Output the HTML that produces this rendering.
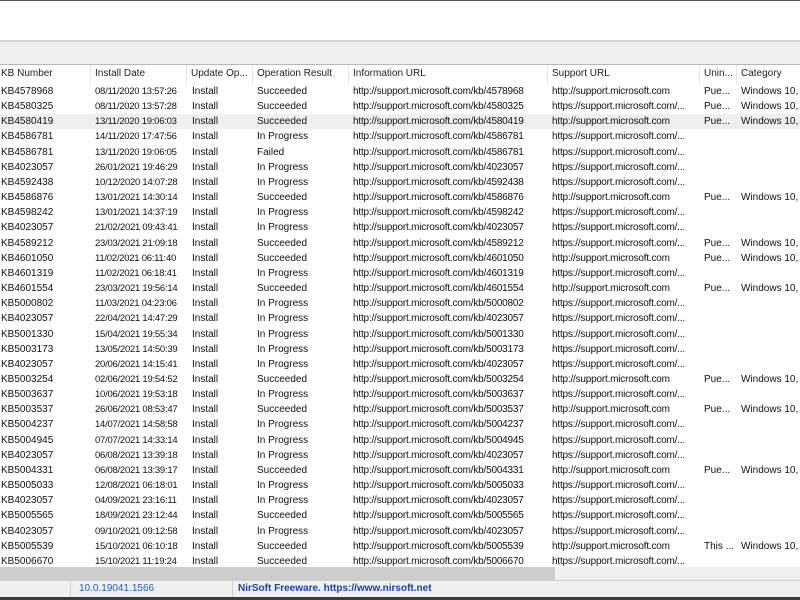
<!DOCTYPE html>
<html><head><meta charset="utf-8"><style>
*{margin:0;padding:0;box-sizing:border-box}
body{width:800px;height:600px;overflow:hidden;background:#fff;font-family:"Liberation Sans",sans-serif;font-size:10px;color:#111;position:relative}
#top{position:absolute;left:0;top:0;width:800px;height:1px;background:#555}
#tb{position:absolute;left:0;top:40px;width:800px;height:25px;background:#f0f0f0;border-top:2px solid #d4d4d4;border-bottom:1px solid #b8b8b8}
#hdr{position:absolute;left:0;top:65px;width:800px;height:18px;background:#fff}
.h{position:absolute;top:0;height:18px;line-height:18px;padding-left:1px;color:#222;border-right:1px solid #e5e5e5;white-space:nowrap;overflow:hidden}
#rows{position:absolute;left:0;top:84px;width:800px}
.r{position:relative;height:15.17px;line-height:15px;white-space:nowrap}
.r.sel{background:#efefef}
.r span{position:absolute;top:0}
.c0{left:1px}.c1{left:95px;font-size:9.5px;letter-spacing:-0.25px}.c2{left:192px}.c3{left:257px}.c4{left:353px;letter-spacing:-0.2px}.c5{left:552px;letter-spacing:-0.2px}.c6{left:704px}.c7{left:741px}
#sb{position:absolute;left:0;top:567px;width:800px;height:13px;background:#f0f0f0}
#th{position:absolute;left:0;top:567px;width:555px;height:13px;background:#cdcdcd}
#st{position:absolute;left:0;top:580px;width:800px;height:17px;background:#f0f0f0;border-top:1px solid #d0d0d0}
#st div{position:absolute;top:0;height:16px;line-height:16px;color:#1a5fc0;font-size:10px}
#bot{position:absolute;left:0;top:597px;width:800px;height:3px;background:#3a3a3a}
</style></head><body>
<div id="top"></div>
<div id="tb"></div>
<div id="hdr">
<div class="h" style="left:0;width:91px">KB Number</div>
<div class="h" style="left:94px;width:93px">Install Date</div>
<div class="h" style="left:190px;width:63px">Update Op...</div>
<div class="h" style="left:256px;width:93px">Operation Result</div>
<div class="h" style="left:352px;width:196px">Information URL</div>
<div class="h" style="left:551px;width:149px">Support URL</div>
<div class="h" style="left:703px;width:34px">Unin...</div>
<div class="h" style="left:740px;width:60px;border:none">Category</div>
</div>
<div id="rows">
<div class="r"><span class="c0">KB4578968</span><span class="c1">08/11/2020 13:57:26</span><span class="c2">Install</span><span class="c3">Succeeded</span><span class="c4">http://support.microsoft.com/kb/4578968</span><span class="c5">http://support.microsoft.com</span><span class="c6">Pue...</span><span class="c7">Windows 10, v</span></div>
<div class="r"><span class="c0">KB4580325</span><span class="c1">08/11/2020 13:57:28</span><span class="c2">Install</span><span class="c3">Succeeded</span><span class="c4">http://support.microsoft.com/kb/4580325</span><span class="c5">https://support.microsoft.com/...</span><span class="c6">Pue...</span><span class="c7">Windows 10, v</span></div>
<div class="r sel"><span class="c0">KB4580419</span><span class="c1">13/11/2020 19:06:03</span><span class="c2">Install</span><span class="c3">Succeeded</span><span class="c4">http://support.microsoft.com/kb/4580419</span><span class="c5">http://support.microsoft.com</span><span class="c6">Pue...</span><span class="c7">Windows 10, v</span></div>
<div class="r"><span class="c0">KB4586781</span><span class="c1">14/11/2020 17:47:56</span><span class="c2">Install</span><span class="c3">In Progress</span><span class="c4">http://support.microsoft.com/kb/4586781</span><span class="c5">https://support.microsoft.com/...</span></div>
<div class="r"><span class="c0">KB4586781</span><span class="c1">13/11/2020 19:06:05</span><span class="c2">Install</span><span class="c3">Failed</span><span class="c4">http://support.microsoft.com/kb/4586781</span><span class="c5">https://support.microsoft.com/...</span></div>
<div class="r"><span class="c0">KB4023057</span><span class="c1">26/01/2021 19:46:29</span><span class="c2">Install</span><span class="c3">In Progress</span><span class="c4">http://support.microsoft.com/kb/4023057</span><span class="c5">https://support.microsoft.com/...</span></div>
<div class="r"><span class="c0">KB4592438</span><span class="c1">10/12/2020 14:07:28</span><span class="c2">Install</span><span class="c3">In Progress</span><span class="c4">http://support.microsoft.com/kb/4592438</span><span class="c5">https://support.microsoft.com/...</span></div>
<div class="r"><span class="c0">KB4586876</span><span class="c1">13/01/2021 14:30:14</span><span class="c2">Install</span><span class="c3">Succeeded</span><span class="c4">http://support.microsoft.com/kb/4586876</span><span class="c5">http://support.microsoft.com</span><span class="c6">Pue...</span><span class="c7">Windows 10, v</span></div>
<div class="r"><span class="c0">KB4598242</span><span class="c1">13/01/2021 14:37:19</span><span class="c2">Install</span><span class="c3">In Progress</span><span class="c4">http://support.microsoft.com/kb/4598242</span><span class="c5">https://support.microsoft.com/...</span></div>
<div class="r"><span class="c0">KB4023057</span><span class="c1">21/02/2021 09:43:41</span><span class="c2">Install</span><span class="c3">In Progress</span><span class="c4">http://support.microsoft.com/kb/4023057</span><span class="c5">https://support.microsoft.com/...</span></div>
<div class="r"><span class="c0">KB4589212</span><span class="c1">23/03/2021 21:09:18</span><span class="c2">Install</span><span class="c3">Succeeded</span><span class="c4">http://support.microsoft.com/kb/4589212</span><span class="c5">https://support.microsoft.com/...</span><span class="c6">Pue...</span><span class="c7">Windows 10, v</span></div>
<div class="r"><span class="c0">KB4601050</span><span class="c1">11/02/2021 06:11:40</span><span class="c2">Install</span><span class="c3">Succeeded</span><span class="c4">http://support.microsoft.com/kb/4601050</span><span class="c5">http://support.microsoft.com</span><span class="c6">Pue...</span><span class="c7">Windows 10, v</span></div>
<div class="r"><span class="c0">KB4601319</span><span class="c1">11/02/2021 06:18:41</span><span class="c2">Install</span><span class="c3">In Progress</span><span class="c4">http://support.microsoft.com/kb/4601319</span><span class="c5">https://support.microsoft.com/...</span></div>
<div class="r"><span class="c0">KB4601554</span><span class="c1">23/03/2021 19:56:14</span><span class="c2">Install</span><span class="c3">Succeeded</span><span class="c4">http://support.microsoft.com/kb/4601554</span><span class="c5">http://support.microsoft.com</span><span class="c6">Pue...</span><span class="c7">Windows 10, v</span></div>
<div class="r"><span class="c0">KB5000802</span><span class="c1">11/03/2021 04:23:06</span><span class="c2">Install</span><span class="c3">In Progress</span><span class="c4">http://support.microsoft.com/kb/5000802</span><span class="c5">https://support.microsoft.com/...</span></div>
<div class="r"><span class="c0">KB4023057</span><span class="c1">22/04/2021 14:47:29</span><span class="c2">Install</span><span class="c3">In Progress</span><span class="c4">http://support.microsoft.com/kb/4023057</span><span class="c5">https://support.microsoft.com/...</span></div>
<div class="r"><span class="c0">KB5001330</span><span class="c1">15/04/2021 19:55:34</span><span class="c2">Install</span><span class="c3">In Progress</span><span class="c4">http://support.microsoft.com/kb/5001330</span><span class="c5">https://support.microsoft.com/...</span></div>
<div class="r"><span class="c0">KB5003173</span><span class="c1">13/05/2021 14:50:39</span><span class="c2">Install</span><span class="c3">In Progress</span><span class="c4">http://support.microsoft.com/kb/5003173</span><span class="c5">https://support.microsoft.com/...</span></div>
<div class="r"><span class="c0">KB4023057</span><span class="c1">20/06/2021 14:15:41</span><span class="c2">Install</span><span class="c3">In Progress</span><span class="c4">http://support.microsoft.com/kb/4023057</span><span class="c5">https://support.microsoft.com/...</span></div>
<div class="r"><span class="c0">KB5003254</span><span class="c1">02/06/2021 19:54:52</span><span class="c2">Install</span><span class="c3">Succeeded</span><span class="c4">http://support.microsoft.com/kb/5003254</span><span class="c5">http://support.microsoft.com</span><span class="c6">Pue...</span><span class="c7">Windows 10, v</span></div>
<div class="r"><span class="c0">KB5003637</span><span class="c1">10/06/2021 19:53:18</span><span class="c2">Install</span><span class="c3">In Progress</span><span class="c4">http://support.microsoft.com/kb/5003637</span><span class="c5">https://support.microsoft.com/...</span></div>
<div class="r"><span class="c0">KB5003537</span><span class="c1">26/06/2021 08:53:47</span><span class="c2">Install</span><span class="c3">Succeeded</span><span class="c4">http://support.microsoft.com/kb/5003537</span><span class="c5">http://support.microsoft.com</span><span class="c6">Pue...</span><span class="c7">Windows 10, v</span></div>
<div class="r"><span class="c0">KB5004237</span><span class="c1">14/07/2021 14:58:58</span><span class="c2">Install</span><span class="c3">In Progress</span><span class="c4">http://support.microsoft.com/kb/5004237</span><span class="c5">https://support.microsoft.com/...</span></div>
<div class="r"><span class="c0">KB5004945</span><span class="c1">07/07/2021 14:33:14</span><span class="c2">Install</span><span class="c3">In Progress</span><span class="c4">http://support.microsoft.com/kb/5004945</span><span class="c5">https://support.microsoft.com/...</span></div>
<div class="r"><span class="c0">KB4023057</span><span class="c1">06/08/2021 13:39:18</span><span class="c2">Install</span><span class="c3">In Progress</span><span class="c4">http://support.microsoft.com/kb/4023057</span><span class="c5">https://support.microsoft.com/...</span></div>
<div class="r"><span class="c0">KB5004331</span><span class="c1">06/08/2021 13:39:17</span><span class="c2">Install</span><span class="c3">Succeeded</span><span class="c4">http://support.microsoft.com/kb/5004331</span><span class="c5">http://support.microsoft.com</span><span class="c6">Pue...</span><span class="c7">Windows 10, v</span></div>
<div class="r"><span class="c0">KB5005033</span><span class="c1">12/08/2021 06:18:01</span><span class="c2">Install</span><span class="c3">In Progress</span><span class="c4">http://support.microsoft.com/kb/5005033</span><span class="c5">https://support.microsoft.com/...</span></div>
<div class="r"><span class="c0">KB4023057</span><span class="c1">04/09/2021 23:16:11</span><span class="c2">Install</span><span class="c3">In Progress</span><span class="c4">http://support.microsoft.com/kb/4023057</span><span class="c5">https://support.microsoft.com/...</span></div>
<div class="r"><span class="c0">KB5005565</span><span class="c1">18/09/2021 23:12:44</span><span class="c2">Install</span><span class="c3">Succeeded</span><span class="c4">http://support.microsoft.com/kb/5005565</span><span class="c5">https://support.microsoft.com/...</span></div>
<div class="r"><span class="c0">KB4023057</span><span class="c1">09/10/2021 09:12:58</span><span class="c2">Install</span><span class="c3">In Progress</span><span class="c4">http://support.microsoft.com/kb/4023057</span><span class="c5">https://support.microsoft.com/...</span></div>
<div class="r"><span class="c0">KB5005539</span><span class="c1">15/10/2021 06:10:18</span><span class="c2">Install</span><span class="c3">Succeeded</span><span class="c4">http://support.microsoft.com/kb/5005539</span><span class="c5">http://support.microsoft.com</span><span class="c6">This ...</span><span class="c7">Windows 10, v</span></div>
<div class="r"><span class="c0">KB5006670</span><span class="c1">15/10/2021 11:19:24</span><span class="c2">Install</span><span class="c3">Succeeded</span><span class="c4">http://support.microsoft.com/kb/5006670</span><span class="c5">https://support.microsoft.com/...</span></div>
</div>
<div id="sb"></div><div id="th"></div>
<div id="st">
<div style="left:0;width:71px;border-right:1px solid #d0d0d0"></div>
<div style="left:79px">10.0.19041.1566</div>
<div style="left:232px;width:1px;background:#d0d0d0"></div>
<div style="left:238px;font-weight:bold;color:#1a3fb0;font-size:10px">NirSoft Freeware. https://www.nirsoft.net</div>
</div>
<div id="bot"></div>
</body></html>
